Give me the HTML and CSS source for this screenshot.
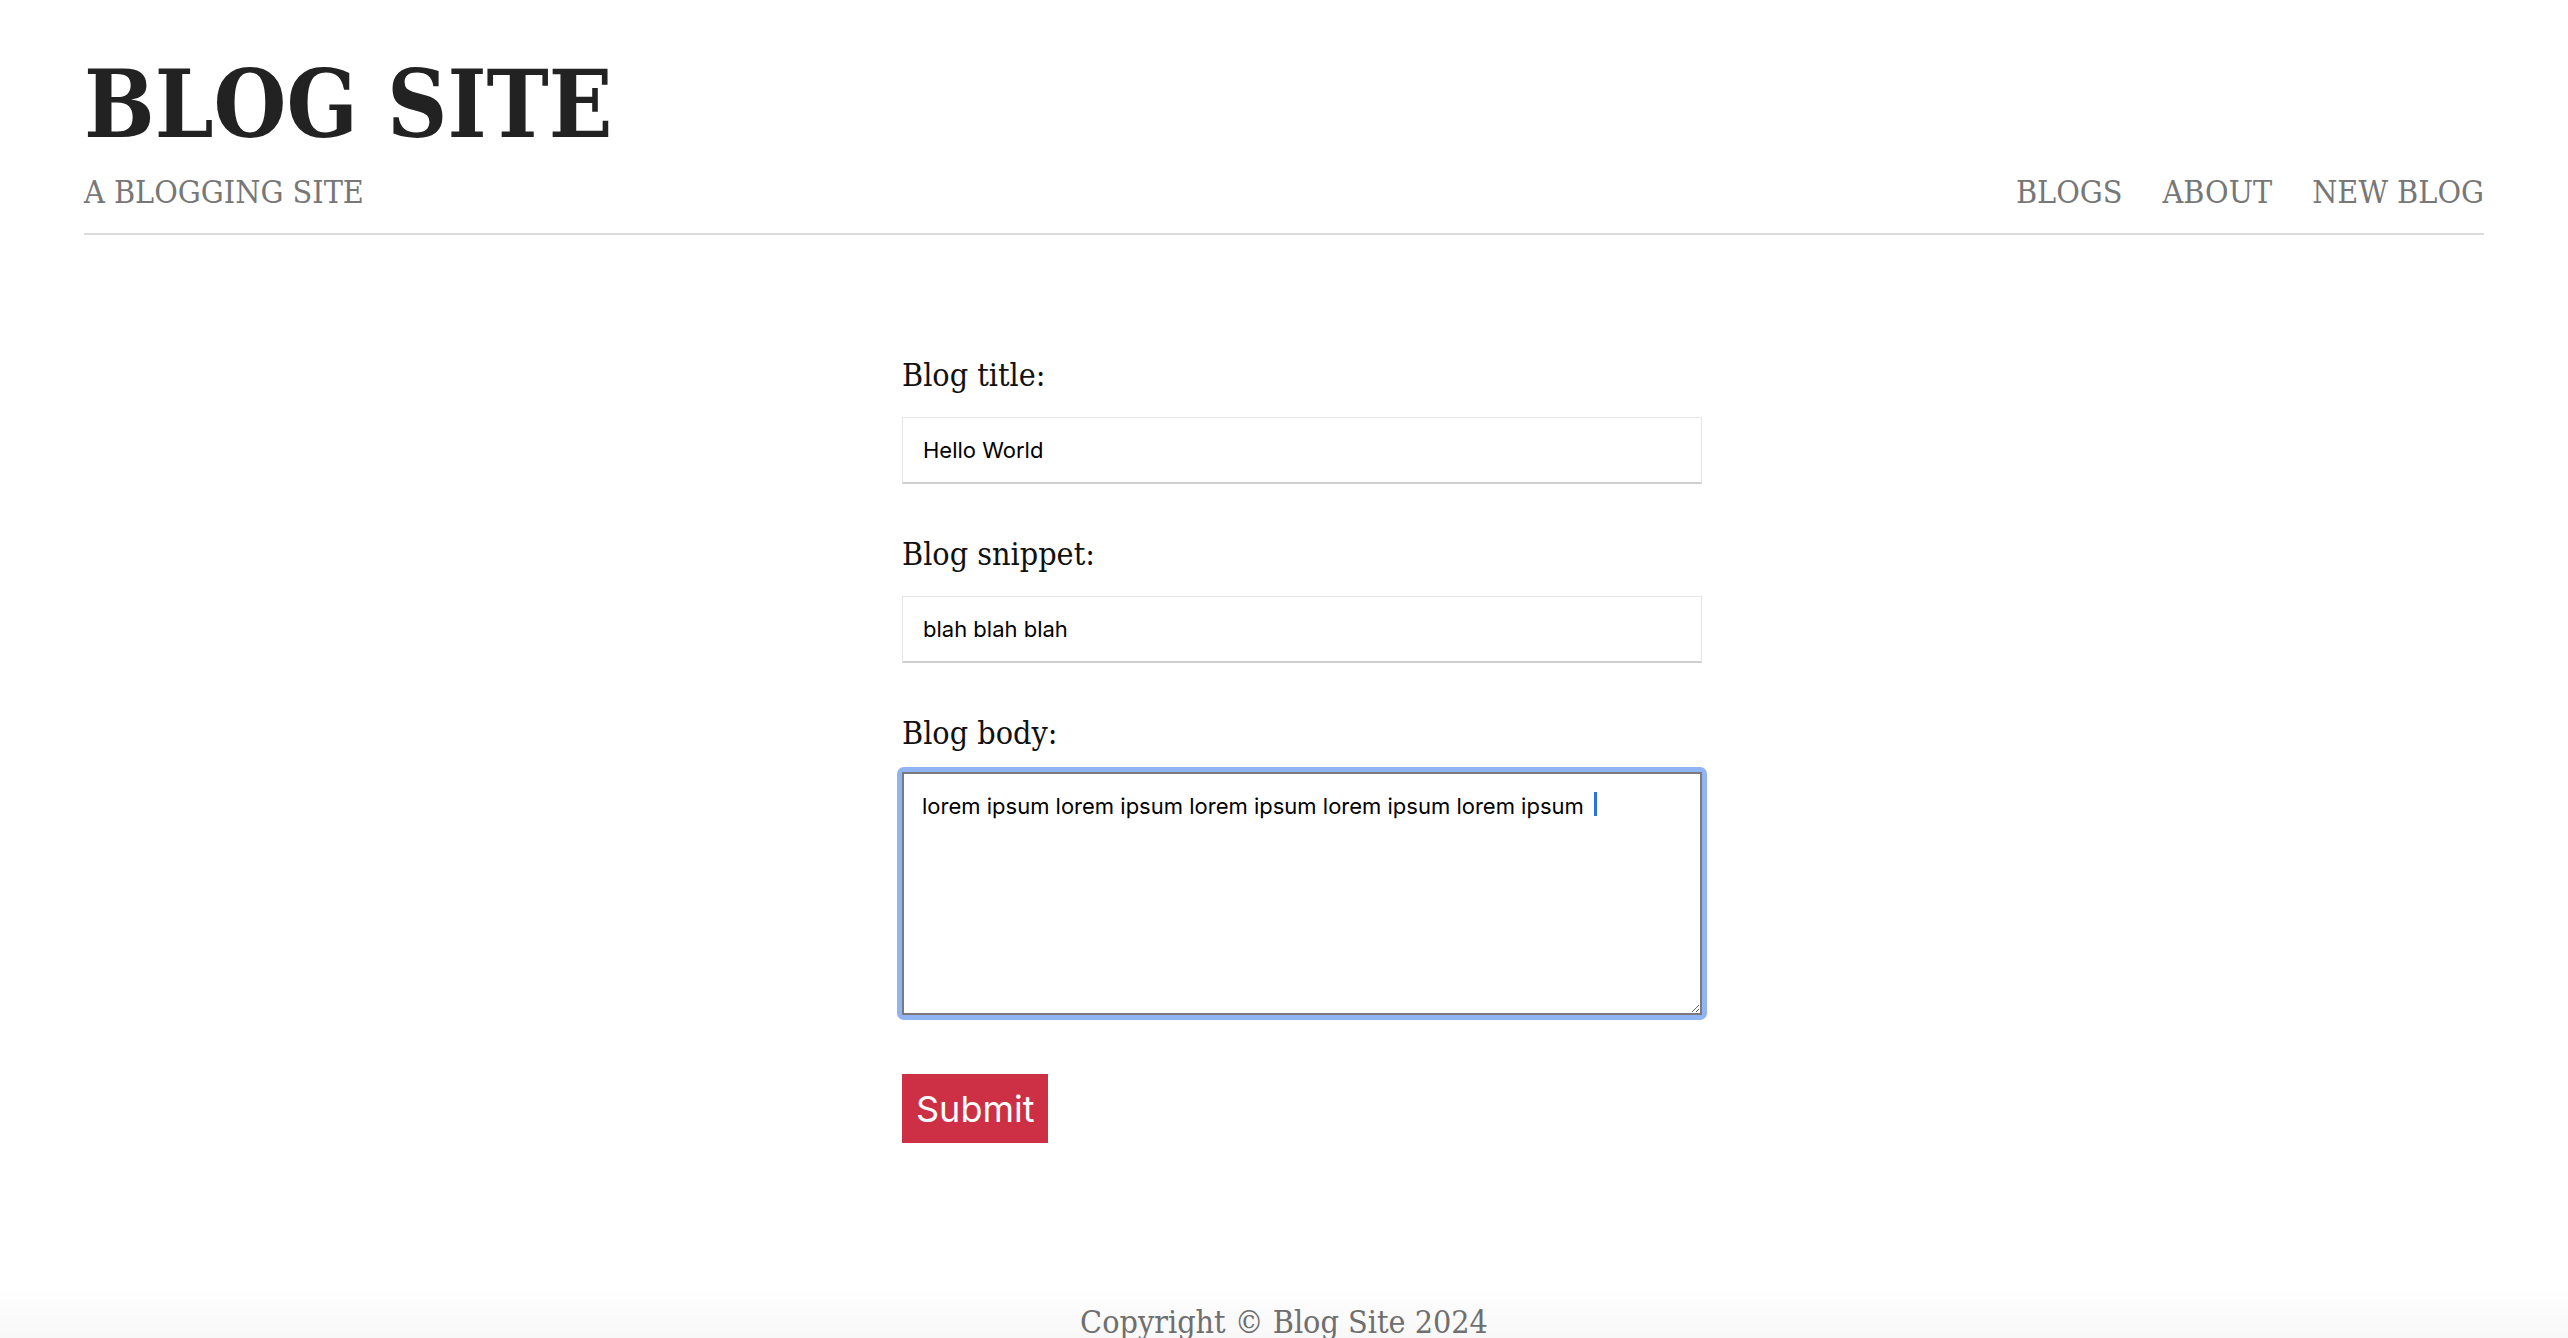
FILE: index.html
```html
<!DOCTYPE html>
<html lang="en">
<head>
<meta charset="utf-8">
<title>Blog Site</title>
<link rel="stylesheet" href="styles.css">
</head>
<body>
<header class="site-header">
  <h1 class="brand-title">BLOG SITE</h1>
  <div class="brand-row">
    <p class="tagline">A BLOGGING SITE</p>
    <nav class="nav">
      <a href="#">BLOGS</a>
      <a href="#">ABOUT</a>
      <a href="#">NEW BLOG</a>
    </nav>
  </div>
</header>
<main class="create">
  <form class="blog-form">
    <label class="field-label" for="title">Blog title:</label>
    <input class="field-input" id="title" type="text" value="Hello World">
    <label class="field-label" for="snippet">Blog snippet:</label>
    <input class="field-input" id="snippet" type="text" value="blah blah blah">
    <label class="field-label" for="body">Blog body:</label>
    <div class="focus-ring">
      <textarea class="field-area" id="body">lorem ipsum lorem ipsum lorem ipsum lorem ipsum lorem ipsum </textarea>
      <span class="caret"></span>
    </div>
    <button class="submit" type="button">Submit</button>
  </form>
</main>
<footer class="site-footer">
  <p class="copyright">Copyright &copy; Blog Site 2024</p>
</footer>
</body>
</html>
```
FILE: styles.css
```css
html, body {
  margin: 0;
  padding: 0;
  background: #fff;
}
body {
  font-family: "DejaVu Serif Condensed", "DejaVu Serif", serif;
  color: #222;
}
.site-header {
  margin: 0 84px;
  border-bottom: 2px solid #dcdcdc;
}
.brand-title {
  margin: 0;
  padding-top: 58px;
  font-size: 93px;
  line-height: 1;
  font-weight: 700;
  color: #222;
}
.brand-row {
  display: flex;
  justify-content: space-between;
  align-items: baseline;
  padding-top: 22px;
  padding-bottom: 22px;
}
.tagline {
  margin: 0;
  font-size: 32px;
  color: #777;
}
.nav {
  display: flex;
  gap: 40px;
}
.nav a {
  font-size: 32px;
  color: #777;
  text-decoration: none;
}
.create {
  width: 800px;
  margin: 0 auto;
  padding-left: 36px;
  padding-top: 118px;
}
.blog-form {
  display: flex;
  flex-direction: column;
  align-items: flex-start;
}
.field-label {
  font-size: 32px;
  line-height: 44px;
  color: #111;
}
.field-input {
  box-sizing: border-box;
  width: 800px;
  height: 67px;
  margin: 20px 0 48px;
  padding: 0 20px;
  border: 1px solid #e6e6e6;
  border-bottom: 2px solid #cfcfcf;
  font-family: Inter, "Liberation Sans", sans-serif;
  font-size: 22px;
  color: #000;
  background: #fff;
  outline: none;
}
.focus-ring {
  position: relative;
  margin: 12px -5px 0;
  padding: 5px;
  border-radius: 7px;
  background: #8fb3f3;
}
.field-area {
  display: block;
  box-sizing: border-box;
  width: 800px;
  height: 243px;
  margin: 0;
  padding: 18px 18px 12px;
  border: 2px solid #7a7a7a;
  font-family: Inter, "Liberation Sans", sans-serif;
  font-size: 22px;
  line-height: 1.3;
  color: #000;
  background: #fff;
  resize: both;
  outline: none;
}
.caret {
  position: absolute;
  left: 697px;
  top: 25px;
  width: 3px;
  height: 24px;
  background: #2f6fe8;
}
.submit {
  margin-top: 54px;
  padding: 0 14px;
  height: 69px;
  border: none;
  background: #cd2f44;
  color: #fff;
  font-family: Inter, "Liberation Sans", sans-serif;
  font-size: 36px;
  cursor: pointer;
}
.site-footer {
  margin-top: 140px;
  background: linear-gradient(to bottom, #fff, #f5f5f5);
}
.copyright {
  margin: 0;
  padding: 20px 0;
  text-align: center;
  font-size: 32px;
  color: #6f6f6f;
}
```
